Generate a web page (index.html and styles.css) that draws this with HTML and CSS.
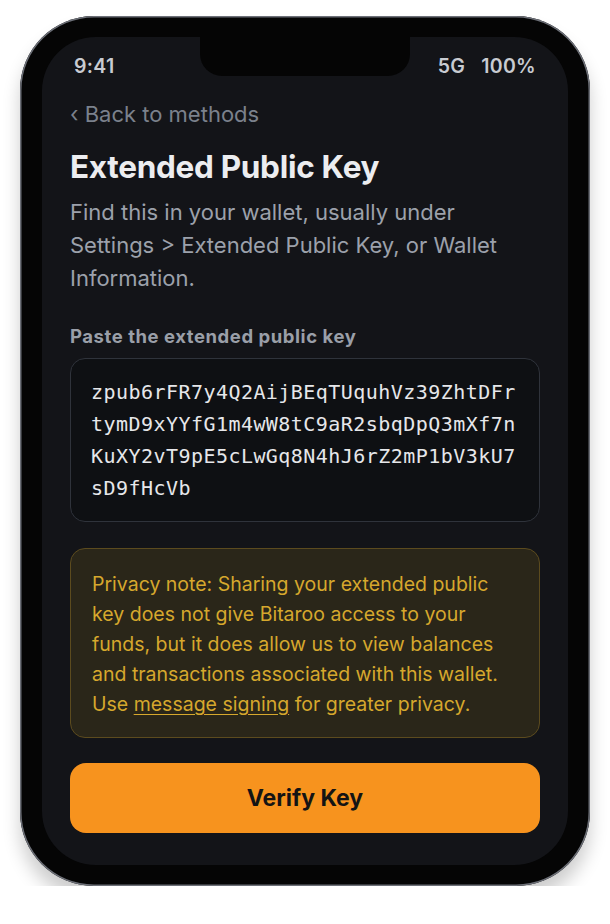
FILE: index.html
```html
<!DOCTYPE html>
<html lang="en">
<head>
    <meta charset="utf-8">
    <title>Extended Public Key</title>
    <meta name="viewport" content="width=device-width, initial-scale=1.0">
    <link rel="stylesheet" href="styles.css">
</head>
<body>
    <div class="phone">
        <div class="screen">
            <div class="notch"></div>
            <div class="status-bar">
                <span>9:41</span>
                <span class="status-right"><span>5G</span><span>100%</span></span>
            </div>
            <div class="content">
                <a class="back-link" href="#">&lsaquo; Back to methods</a>
                <h1>Extended Public Key</h1>
                <p class="desc">Find this in your wallet, usually under Settings &gt; Extended Public Key, or Wallet Information.</p>

                <label class="field-label" for="xpub">Paste the extended public key</label>
                <div class="key-box" id="xpub">zpub6rFR7y4Q2AijBEqTUquhVz39ZhtDFr<br>tymD9xYYfG1m4wW8tC9aR2sbqDpQ3mXf7n<br>KuXY2vT9pE5cLwGq8N4hJ6rZ2mP1bV3kU7<br>sD9fHcVb</div>

                <div class="note">
                    Privacy note: Sharing your extended public<br>
                    key does not give Bitaroo access to your<br>
                    funds, but it does allow us to view balances<br>
                    and transactions associated with this wallet.<br>
                    Use <a href="#">message signing</a> for greater privacy.
                </div>

                <button type="button" class="verify-btn">Verify Key</button>
            </div>
        </div>
    </div>
</body>
</html>
```

FILE: styles.css
```css
body {
    margin: 0;
    padding: 0;
    background-color: #fff;
    font-family: 'Inter', 'Noto Sans', sans-serif;
}
.phone {
    width: 570px;
    height: 870px;
    margin: 16px 0 0 20px;
    padding: 21px 22px;
    box-sizing: border-box;
    background: #050505;
    border-radius: 74px;
    box-shadow: inset 0 0 0 1.5px #6d7078, 0 14px 18px rgba(0,0,0,0.2);
}
.screen {
    position: relative;
    height: 828px;
    background: #131418;
    border-radius: 54px;
    overflow: hidden;
}
.notch {
    position: absolute;
    top: 0;
    left: 158px;
    width: 210px;
    height: 39px;
    background: #050505;
    border-radius: 0 0 22px 22px;
}
.status-bar {
    display: flex;
    justify-content: space-between;
    padding: 18px 32px 0;
    height: 22px;
    line-height: 22px;
    font-size: 19.5px;
    font-weight: 600;
    letter-spacing: 0.3px;
    color: #c8cbd1;
}
.status-right {
    display: flex;
    gap: 16px;
}
.content {
    padding: 25px 28px 0;
}
.back-link {
    display: block;
    font-size: 22px;
    line-height: 24px;
    color: #7b818c;
    text-decoration: none;
}
h1 {
    margin: 23px 0 0;
    font-size: 31.5px;
    line-height: 36px;
    font-weight: 700;
    letter-spacing: -0.3px;
    color: #ecedf0;
}
.desc {
    margin: 11px 0 0;
    font-size: 22px;
    line-height: 33px;
    color: #9ca1ab;
}
.field-label {
    display: block;
    margin-top: 30px;
    font-size: 18.5px;
    line-height: 22px;
    font-weight: 700;
    letter-spacing: 0.55px;
    color: #9a9fa8;
}
.key-box {
    margin-top: 11px;
    padding: 17px 20px;
    border: 1px solid #2f333b;
    border-radius: 15px;
    background: #0e1013;
    font-family: 'DejaVu Sans Mono', 'Liberation Mono', monospace;
    font-size: 20px;
    line-height: 32px;
    letter-spacing: 0.45px;
    color: #e6e7ea;
}
.note {
    margin-top: 26px;
    padding: 20px 10px 18px 21px;
    border: 1px solid #5c4b1e;
    border-radius: 15px;
    background: #2a2619;
    font-size: 19.5px;
    line-height: 30px;
    white-space: nowrap;
    color: #d6a82d;
}
.note a {
    color: #d6a82d;
    text-decoration: underline;
    text-underline-offset: 3px;
}
.verify-btn {
    display: block;
    width: 100%;
    height: 70px;
    margin-top: 25px;
    border: none;
    border-radius: 16px;
    background: #f7931e;
    font-family: 'Inter', sans-serif;
    font-size: 23px;
    font-weight: 700;
    color: #141414;
    cursor: pointer;
}
```
